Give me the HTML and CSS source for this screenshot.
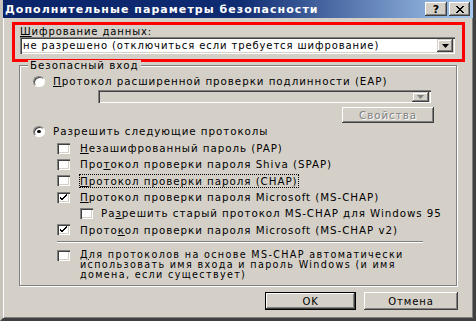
FILE: index.html
```html
<!DOCTYPE html>
<html lang="ru">
<head>
<meta charset="utf-8">
<title>Дополнительные параметры безопасности</title>
<link rel="stylesheet" href="styles.css">
</head>
<body>
<div class="window">
  <div class="titlebar">
    <span class="title">Дополнительные параметры безопасности</span>
    <div class="tb-btns">
      <span class="tbtn help">?</span>
      <span class="tbtn close"><svg width="8" height="7" viewBox="0 0 8 7"><path d="M0 0L7 7M1 0L8 7M7 0L0 7M8 0L1 7" stroke="#000" stroke-width="1" fill="none"/></svg></span>
    </div>
  </div>

  <div class="highlight">
    <div class="label"><u>Ш</u>ифрование данных:</div>
    <div class="select">
      <span class="select-text">не разрешено (отключиться если требуется шифрование)</span>
      <span class="arrow"><svg width="7" height="4" viewBox="0 0 7 4"><path d="M0 0H7L3.5 4Z" fill="#000"/></svg></span>
    </div>
  </div>

  <div class="group">
    <span class="legend">Безопасный вход</span>
    <div class="row">
      <span class="radio"></span>
      <span><u>П</u>ротокол расширенной проверки подлинности (EAP)</span>
    </div>
    <div class="select eap">
      <span class="select-text"></span>
      <span class="arrow"><svg width="7" height="4" viewBox="0 0 7 4"><path d="M0 0H7L3.5 4Z" fill="#808080"/></svg></span>
    </div>
    <div class="btn props">Свойства</div>
    <div class="row">
      <span class="radio checked"></span>
      <span>Разрешить следующие протоколы</span>
    </div>
    <div class="checks">
      <div class="row check-row">
        <span class="check"></span>
        <span><u>Н</u>езашифрованный пароль (PAP)</span>
      </div>
      <div class="row check-row">
        <span class="check"></span>
        <span>Про<u>т</u>окол проверки пароля Shiva (SPAP)</span>
      </div>
      <div class="row check-row">
        <span class="check"></span>
        <span class="focus"><u>П</u>ротокол проверки пароля (CHAP)</span>
      </div>
      <div class="row check-row">
        <span class="check checked"><svg width="9" height="7" viewBox="0 0 9 7"><path d="M1 3L3 5L8 0M1 4L3 6L8 1" stroke="#000" fill="none"/></svg></span>
        <span><u>П</u>ротокол проверки пароля Microsoft (MS-CHAP)</span>
      </div>
      <div class="row check-row sub">
        <span class="check"></span>
        <span>Ра<u>з</u>решить старый протокол MS-CHAP для Windows 95</span>
      </div>
      <div class="row check-row">
        <span class="check checked"><svg width="9" height="7" viewBox="0 0 9 7"><path d="M1 3L3 5L8 0M1 4L3 6L8 1" stroke="#000" fill="none"/></svg></span>
        <span>Прото<u>к</u>ол проверки пароля Microsoft (MS-CHAP v2)</span>
      </div>
    </div>
    <div class="separator"></div>
    <div class="multi-row">
      <span class="check"></span>
      <span class="multi-text"><u>Д</u>ля протоколов на основе MS-CHAP автоматически<br>использовать имя входа и пароль Windows (и имя<br>домена, если существует)</span>
    </div>
  </div>

  <div class="buttons">
    <div class="btn default">OK</div>
    <div class="btn">Отмена</div>
  </div>
</div>
</body>
</html>
```
FILE: styles.css
```css
* { box-sizing: border-box; }
html, body { margin: 0; padding: 0; }
body {
  width: 476px;
  height: 321px;
  overflow: hidden;
  background: #d4d0c8;
  font-family: "DejaVu Sans", Verdana, sans-serif;
  font-size: 10px;
  letter-spacing: 0.9px;
  color: #000;
}
u { text-decoration: underline; text-underline-offset: 1px; }

.window {
  width: 476px;
  height: 321px;
  background: #d4d0c8;
  border-left: 3px solid #c8c4bc;
  border-right: 3px solid #404040;
  border-bottom: 3px solid #404040;
  box-shadow: inset 1px 0 #fff, inset -1px -1px #808080;
  display: flex;
  flex-direction: column;
}

.titlebar {
  height: 18px;
  flex: none;
  background: linear-gradient(90deg, #0a246a 0%, #0f2b72 50%, #a6caf0 100%);
  display: flex;
  align-items: center;
  justify-content: space-between;
  padding: 0 3px 0 2px;
}
.title {
  color: #fff;
  font-weight: bold;
  font-size: 11px;
  letter-spacing: 1.05px;
  white-space: nowrap;
}
.tb-btns { display: flex; gap: 2px; }
.tbtn {
  width: 21px;
  height: 14px;
  background: #d4d0c8;
  box-shadow: inset -1px -1px #404040, inset 1px 1px #fff, inset -2px -2px #808080;
  display: flex;
  align-items: center;
  justify-content: center;
  font-weight: bold;
  font-size: 11px;
  letter-spacing: 0;
  line-height: 1;
}
.tbtn.help { width: 22px; }

.highlight {
  flex: none;
  margin: 4px 0 0 9px;
  width: 453px;
  border: 3px solid #f00;
  padding: 1px 7px 5px 5px;
}
.label { line-height: 11px; height: 11px; }

.select {
  height: 17px;
  background: #fff;
  box-shadow: inset 1px 1px #808080, inset 2px 2px #404040, inset -1px -1px #fff, inset -2px -2px #d4d0c8;
  display: flex;
  align-items: center;
  justify-content: space-between;
  padding: 0 2px 0 3px;
}
.select-text { white-space: nowrap; }
.arrow {
  width: 16px;
  height: 13px;
  background: #d4d0c8;
  box-shadow: inset -1px -1px #404040, inset 1px 1px #d4d0c8, inset -2px -2px #808080, inset 2px 2px #fff;
  display: flex;
  align-items: center;
  justify-content: center;
}

.group {
  flex: none;
  position: relative;
  margin: 3px 0 0 16px;
  width: 438px;
  height: 221px;
  border: 1px solid #808080;
  box-shadow: inset 1px 1px #fff, 1px 1px #fff;
  padding: 7px 0 0 13px;
  font-size: 10.3px;
  letter-spacing: 0.95px;
}
.legend {
  position: absolute;
  top: -6px;
  left: 8px;
  padding: 0 2px;
  background: #d4d0c8;
  line-height: 11px;
}

.row {
  display: flex;
  align-items: center;
  height: 16px;
  white-space: nowrap;
}
.radio {
  position: relative;
  width: 12px;
  height: 11px;
  flex: none;
  margin-right: 8px;
  border-radius: 50%;
  background: #fff;
  border: 1px solid;
  border-color: #808080 #fff #fff #808080;
  box-shadow: inset 1px 1px #404040;
}
.radio.checked::after {
  content: "";
  position: absolute;
  left: 3px;
  top: 3px;
  width: 4px;
  height: 3px;
  border-radius: 50%;
  background: #000;
}

.select.eap {
  margin: 1px 0 0 65px;
  width: 333px;
  height: 13px;
  background: #d4d0c8;
  padding: 0 2px 0 2px;
}
.select.eap .arrow { width: 17px; height: 10px; }

.btn {
  height: 18px;
  width: 91px;
  background: #d4d0c8;
  box-shadow: inset -1px -1px #404040, inset 1px 1px #fff, inset -2px -2px #808080;
  display: flex;
  align-items: center;
  justify-content: center;
}
.btn.props {
  margin: 4px 0 0 309px;
  width: 92px;
  height: 16px;
  color: #808080;
  text-shadow: 1px 1px #fff;
}

.checks { margin-top: 1px; }
.check-row { height: 16.3px; margin-left: 24px; }
.check-row.sub { margin-left: 47px; }
.check {
  width: 13px;
  height: 11px;
  flex: none;
  margin-right: 10px;
  background: #fff;
  box-shadow: inset 1px 1px #808080, inset 2px 2px #404040, inset -1px -1px #fff, inset -2px -2px #d4d0c8;
  display: flex;
  align-items: center;
  justify-content: center;
}
.check-row.sub .check { margin-right: 8px; }
.focus { outline: 1px dotted #000; outline-offset: 0; }

.separator {
  margin: 3px 0 0 24px;
  width: 366px;
  height: 2px;
  border-top: 1px solid #808080;
  border-bottom: 1px solid #fff;
}

.multi-row {
  display: flex;
  align-items: flex-start;
  margin: 7px 0 0 24px;
}
.multi-text {
  font-size: 9.6px;
  letter-spacing: 1.35px;
  line-height: 10px;
  white-space: nowrap;
}

.buttons {
  flex: none;
  display: flex;
  justify-content: flex-end;
  gap: 8px;
  margin: 6px 15px 0 0;
}
.btn.default {
  box-shadow: inset 0 0 0 1px #000, inset -2px -2px #404040, inset 2px 2px #fff, inset -3px -3px #808080;
}
.buttons .btn:last-child { width: 94px; }
```
